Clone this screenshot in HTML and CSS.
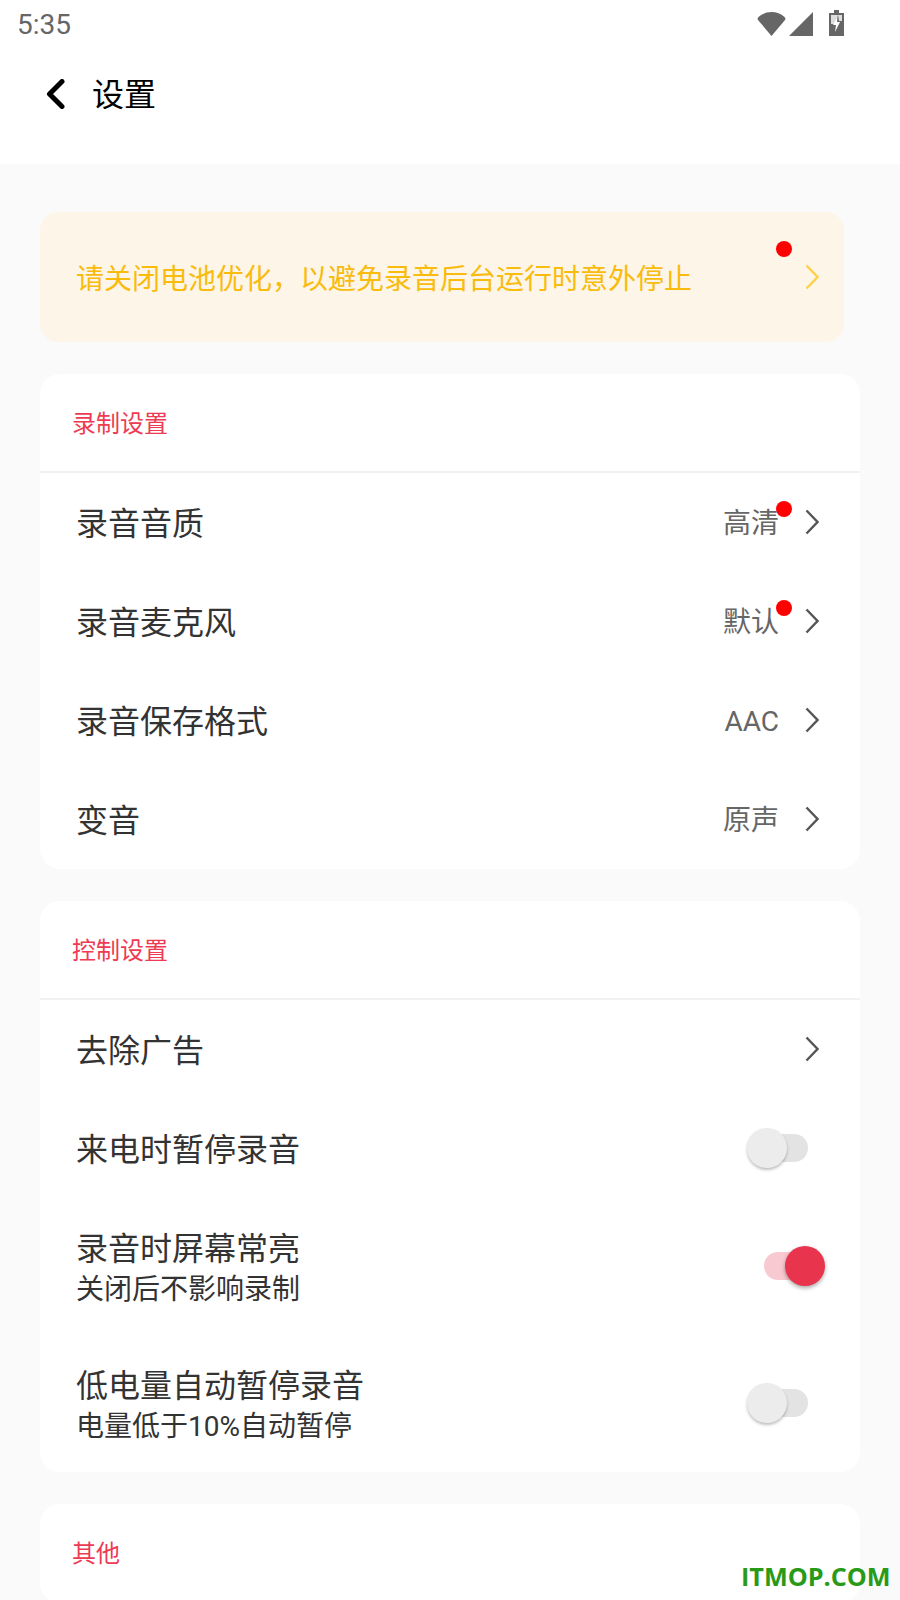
FILE: index.html
```html
<!DOCTYPE html>
<html lang="zh-CN">
<head>
    <meta charset="UTF-8">
    <meta name="viewport" content="width=device-width, initial-scale=1.0">
    <title>设置</title>
    <link rel="stylesheet" href="styles.css">
</head>
<body>
    <div class="page">
        <header class="top">
            <div class="status">
                <span class="clock">5:35</span>
                <div class="status-icons">
                    <svg class="wifi" width="29" height="24" viewBox="0 0 29 24"><path d="M14.5 24 L1 8 Q0 6.5 1.5 5 Q7 0 14.5 0 Q22 0 27.5 5 Q29 6.5 28 8 Z" fill="#666"/></svg>
                    <svg class="signal" width="24" height="24" viewBox="0 0 24 24"><path d="M24 0 V24 H0 Z" fill="#666"/></svg>
                    <svg class="battery" width="15" height="26" viewBox="0 0 15 26">
                        <path d="M5 0 H10 V3 H15 V26 H0 V3 H5 Z" fill="#666"/>
                        <path d="M2 5 H13 V11 H10 L9 5 L5 14 H2 Z" fill="#ddd"/>
                        <path d="M8.5 6 L4 15 H7 L6 22 L11 12 H8 Z" fill="#fff"/>
                    </svg>
                </div>
            </div>
            <div class="titlebar">
                <svg class="back" width="20" height="30" viewBox="0 0 20 30"><path d="M17 2.5 L4.5 15 L17 27.5" fill="none" stroke="#000" stroke-width="5" stroke-linecap="round" stroke-linejoin="round"/></svg>
                <h1>设置</h1>
            </div>
        </header>

        <main class="content">
            <div class="banner">
                <span class="banner-text">请关闭电池优化，以避免录音后台运行时意外停止</span>
                <span class="dot banner-dot"></span>
                <svg class="arrow" width="14" height="26" viewBox="0 0 14 26"><path d="M1.5 1.5 L12.5 13 L1.5 24.5" fill="none" stroke="#ffd04a" stroke-width="2.4"/></svg>
            </div>

            <section class="card">
                <div class="card-title">录制设置</div>
                <div class="row">
                    <span class="row-name">录音音质</span>
                    <div class="row-right">
                        <span class="value">高清<span class="dot value-dot"></span></span>
                        <svg class="arrow" width="14" height="26" viewBox="0 0 14 26"><path d="M1.5 1.5 L12.5 13 L1.5 24.5" fill="none" stroke="#555" stroke-width="2.4"/></svg>
                    </div>
                </div>
                <div class="row">
                    <span class="row-name">录音麦克风</span>
                    <div class="row-right">
                        <span class="value">默认<span class="dot value-dot"></span></span>
                        <svg class="arrow" width="14" height="26" viewBox="0 0 14 26"><path d="M1.5 1.5 L12.5 13 L1.5 24.5" fill="none" stroke="#555" stroke-width="2.4"/></svg>
                    </div>
                </div>
                <div class="row">
                    <span class="row-name">录音保存格式</span>
                    <div class="row-right">
                        <span class="value">AAC</span>
                        <svg class="arrow" width="14" height="26" viewBox="0 0 14 26"><path d="M1.5 1.5 L12.5 13 L1.5 24.5" fill="none" stroke="#555" stroke-width="2.4"/></svg>
                    </div>
                </div>
                <div class="row">
                    <span class="row-name">变音</span>
                    <div class="row-right">
                        <span class="value">原声</span>
                        <svg class="arrow" width="14" height="26" viewBox="0 0 14 26"><path d="M1.5 1.5 L12.5 13 L1.5 24.5" fill="none" stroke="#555" stroke-width="2.4"/></svg>
                    </div>
                </div>
            </section>

            <section class="card">
                <div class="card-title">控制设置</div>
                <div class="row">
                    <span class="row-name">去除广告</span>
                    <div class="row-right">
                        <svg class="arrow" width="14" height="26" viewBox="0 0 14 26"><path d="M1.5 1.5 L12.5 13 L1.5 24.5" fill="none" stroke="#555" stroke-width="2.4"/></svg>
                    </div>
                </div>
                <div class="row">
                    <span class="row-name">来电时暂停录音</span>
                    <div class="switch"><span class="thumb"></span></div>
                </div>
                <div class="row row-tall">
                    <div class="row-text">
                        <span class="row-name">录音时屏幕常亮</span>
                        <span class="row-sub">关闭后不影响录制</span>
                    </div>
                    <div class="switch on"><span class="thumb"></span></div>
                </div>
                <div class="row row-tall">
                    <div class="row-text">
                        <span class="row-name">低电量自动暂停录音</span>
                        <span class="row-sub">电量低于10%自动暂停</span>
                    </div>
                    <div class="switch"><span class="thumb"></span></div>
                </div>
            </section>

            <section class="card">
                <div class="card-title">其他</div>
            </section>
        </main>

        <div class="watermark">ITMOP.COM</div>
    </div>
</body>
</html>
```

FILE: styles.css
```css
html, body {
    margin: 0;
    padding: 0;
}
body {
    font-family: Roboto, "Noto Sans CJK SC", sans-serif;
    background-color: #fafafa;
}
.page {
    position: relative;
    width: 900px;
    height: 1600px;
    overflow: hidden;
}
.top {
    height: 164px;
    background-color: #fff;
}
.status {
    display: flex;
    justify-content: space-between;
    height: 50px;
    padding: 10px 56px 0 17px;
    box-sizing: border-box;
}
.clock {
    font-size: 28px;
    line-height: 30px;
    color: #666;
}
.status-icons {
    display: flex;
    align-items: flex-start;
}
.wifi {
    margin: 2px 3px 0 0;
}
.signal {
    margin: 2px 16px 0 0;
}
.titlebar {
    display: flex;
    align-items: center;
    height: 88px;
    padding-left: 45px;
}
.titlebar h1 {
    margin: 0 0 0 27px;
    padding-top: 2px;
    font-size: 32px;
    font-weight: 400;
    line-height: 42px;
    color: #000;
}
.content {
    display: flex;
    flex-direction: column;
    gap: 32px;
    padding: 48px 40px 0;
}
.banner {
    position: relative;
    display: flex;
    align-items: center;
    justify-content: space-between;
    width: 804px;
    height: 130px;
    padding: 0 25px 0 36px;
    box-sizing: border-box;
    border-radius: 18px;
    background-color: #fcf5e8;
}
.banner-text {
    font-size: 28px;
    color: #f9bb0c;
}
.dot {
    position: absolute;
    width: 16px;
    height: 16px;
    border-radius: 50%;
    background-color: #f00;
}
.banner-dot {
    top: 29px;
    left: 736px;
}
.card {
    width: 820px;
    border-radius: 20px;
    background-color: #fff;
}
.card-title {
    height: 97px;
    padding-left: 32px;
    line-height: 100px;
    font-size: 24px;
    color: #ee3a52;
    border-bottom: 2px solid #f2f2f2;
}
.row {
    display: flex;
    align-items: center;
    justify-content: space-between;
    height: 99px;
    padding: 0 41px 2px 36px;
    box-sizing: border-box;
}
.row-tall {
    height: 136px;
    padding-bottom: 0;
}
.row-tall:last-child {
    height: 138px;
}
.row-text {
    display: flex;
    flex-direction: column;
}
.row-name {
    padding-top: 4px;
    font-size: 32px;
    line-height: 42px;
    color: #333;
}
.row-sub {
    font-size: 28px;
    line-height: 39px;
    color: #333;
}
.row-right {
    display: flex;
    align-items: center;
}
.value {
    position: relative;
    margin-right: 26px;
    padding-top: 4px;
    font-size: 28px;
    line-height: 36px;
    color: #666;
}
.value-dot {
    top: -1px;
    right: -13px;
}
.switch {
    position: relative;
    width: 44px;
    height: 28px;
    margin-right: 11px;
    border-radius: 14px;
    background-color: #e3e3e3;
}
.thumb {
    position: absolute;
    top: -6px;
    left: -17px;
    width: 40px;
    height: 40px;
    border-radius: 50%;
    background-color: #ececec;
    box-shadow: 0 2px 3px rgba(0, 0, 0, 0.25);
}
.switch.on {
    background-color: #f9c9d1;
}
.switch.on .thumb {
    left: 21px;
    background-color: #e8344c;
    box-shadow: 0 2px 4px rgba(0, 0, 0, 0.35);
}
.watermark {
    position: absolute;
    left: 741px;
    top: 1557px;
    font-family: "Open Sans", sans-serif;
    font-size: 25.2px;
    font-weight: 700;
    line-height: 38px;
    color: #289a18;
}
```
